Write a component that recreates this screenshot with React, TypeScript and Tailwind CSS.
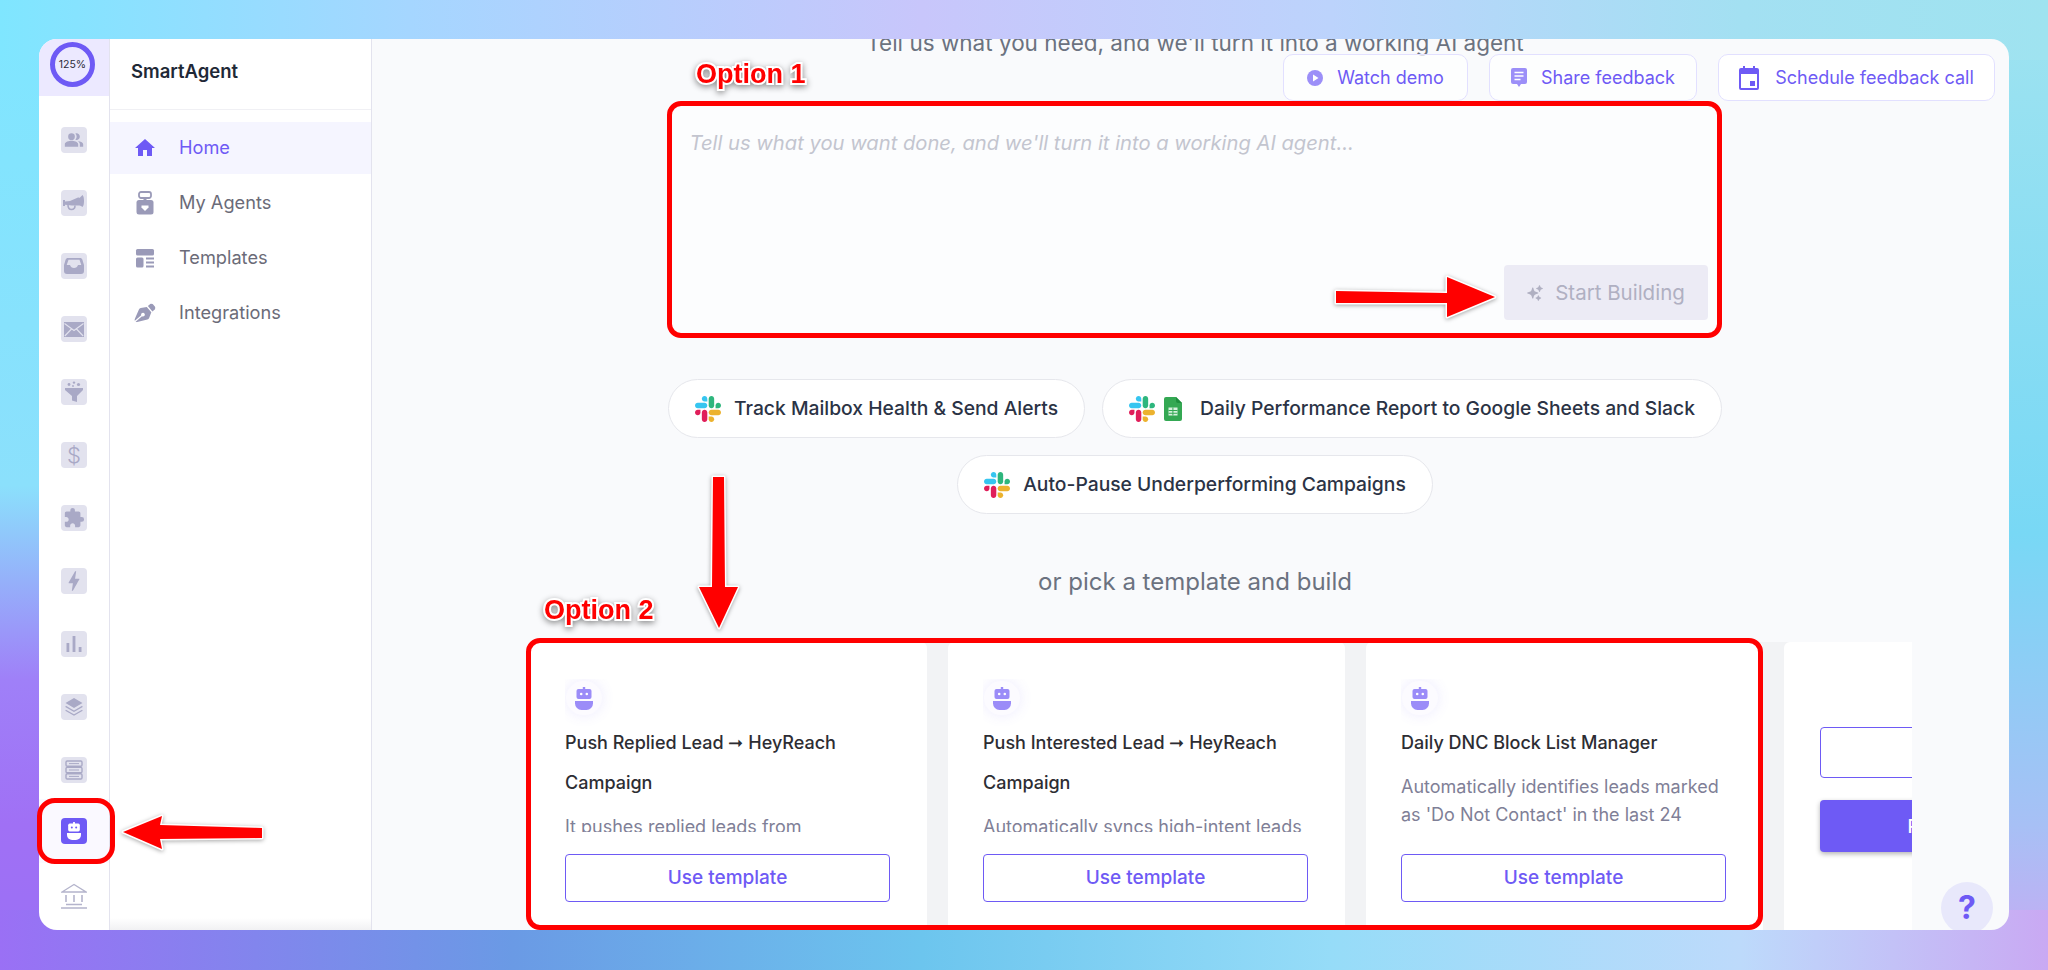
import React from "react";
import { MdHome, MdPeopleAlt, MdExtension, MdBolt } from "react-icons/md";
import { FaPenNib } from "react-icons/fa";
import { HiSparkles } from "react-icons/hi2";

const Slack = () => (
  <svg viewBox="0 0 122.8 122.8" className="w-[26px] h-[26px] shrink-0">
    <path fill="#E01E5A" d="M25.8 77.6c0 7.1-5.8 12.9-12.9 12.9S0 84.7 0 77.6s5.8-12.9 12.9-12.9h12.9v12.9z" />
    <path fill="#E01E5A" d="M32.3 77.6c0-7.1 5.8-12.9 12.9-12.9s12.9 5.8 12.9 12.9v32.3c0 7.1-5.8 12.9-12.9 12.9s-12.9-5.8-12.9-12.9V77.6z" />
    <path fill="#36C5F0" d="M45.2 25.8c-7.1 0-12.9-5.8-12.9-12.9S38.1 0 45.2 0s12.9 5.8 12.9 12.9v12.9H45.2z" />
    <path fill="#36C5F0" d="M45.2 32.3c7.1 0 12.9 5.8 12.9 12.9s-5.8 12.9-12.9 12.9H12.9C5.8 58.1 0 52.3 0 45.2s5.8-12.9 12.9-12.9h32.3z" />
    <path fill="#2EB67D" d="M97 45.2c0-7.1 5.8-12.9 12.9-12.9s12.9 5.8 12.9 12.9-5.8 12.9-12.9 12.9H97V45.2z" />
    <path fill="#2EB67D" d="M90.5 45.2c0 7.1-5.8 12.9-12.9 12.9s-12.9-5.8-12.9-12.9V12.9C64.7 5.8 70.5 0 77.6 0s12.9 5.8 12.9 12.9v32.3z" />
    <path fill="#ECB22E" d="M77.6 97c7.1 0 12.9 5.8 12.9 12.9s-5.8 12.9-12.9 12.9-12.9-5.8-12.9-12.9V97h12.9z" />
    <path fill="#ECB22E" d="M77.6 90.5c-7.1 0-12.9-5.8-12.9-12.9s5.8-12.9 12.9-12.9h32.3c7.1 0 12.9 5.8 12.9 12.9s-5.8 12.9-12.9 12.9H77.6z" />
  </svg>
);

const Sheets = () => (
  <svg viewBox="0 0 18 24" className="w-[18px] h-[24px] shrink-0">
    <path fill="#34A853" d="M2 0h10l6 6v16a2 2 0 0 1-2 2H2a2 2 0 0 1-2-2V2a2 2 0 0 1 2-2z" />
    <path fill="#1E8E3E" d="M12 0l6 6h-4a2 2 0 0 1-2-2z" />
    <path fill="#D7F0DE" d="M4.5 10.5h9v8h-9z" />
    <path fill="#34A853" d="M8.4 10.5h1v8h-1zM4.5 13h9v1h-9zM4.5 15.8h9v1h-9z" />
  </svg>
);

const Robot = ({ color, eye, className }: { color: string; eye: string; className: string }) => (
  <svg viewBox="0 0 18 23" className={className}>
    <rect x="7.8" y="0" width="2.4" height="3" fill={color} />
    <rect x="1.5" y="2" width="15" height="10" rx="2" fill={color} />
    <circle cx="6.2" cy="7" r="1.3" fill={eye} />
    <circle cx="11.8" cy="7" r="1.3" fill={eye} />
    <path fill={color} d="M0 14h18v2.5a6.5 6.5 0 0 1-6.5 6.5h-5A6.5 6.5 0 0 1 0 16.5z" />
  </svg>
);

const c = "#a9a9c6";
const railIcons: React.ReactNode[] = [
  <MdPeopleAlt key="a" size={20} color={c} />,
  <svg key="b" viewBox="0 0 22 18" className="w-[22px] h-[18px]">
    <path fill={c} d="M0 6h2v1.5l5-.5 8-3.5c1 0 1.2 0 1.5.5L18 2.5 19.5 1c1 1 1.5 3 1.5 6s-.5 5-1.5 6l-1.5-1-1.5-.5H9l-7-.8V12H0z" />
    <path fill="none" stroke={c} strokeWidth="1.6" d="M5 11c0 3 1.5 4.5 3.5 4.5S12 14 12 11.5" />
  </svg>,
  <svg key="c" viewBox="0 0 20 18" className="w-[20px] h-[18px]">
    <path fill={c} d="M4 1h12c1.2 0 2 .6 2.4 1.8L20 8v6a3 3 0 0 1-3 3H3a3 3 0 0 1-3-3V8l1.6-5.2C2 1.6 2.8 1 4 1z" />
    <path fill="#e2e2ee" d="M4.5 2.8h11l1.8 5.2H14c-.6 2-2 3-4 3s-3.4-1-4-3H2.7z" />
  </svg>,
  <svg key="d" viewBox="0 0 20 15" className="w-[20px] h-[15px]">
    <rect width="20" height="15" fill={c} />
    <path fill="none" stroke="#e2e2ee" strokeWidth="1.1" d="M0.5 1.5 10 8.5l9.5-7M0.8 14 7.5 7M19.2 14 12.5 7" />
  </svg>,
  <svg key="e" viewBox="0 0 20 22" className="w-[20px] h-[22px]">
    <circle cx="5" cy="3.5" r="1.4" fill={c} /><circle cx="10" cy="1.6" r="1.2" fill={c} /><circle cx="14.5" cy="3.5" r="1.6" fill={c} /><circle cx="9" cy="5" r="0.9" fill={c} />
    <path fill={c} d="M1 7h18v2l-6 6v6l-5-1.5V15L1 9z" />
  </svg>,
  <span key="f" className="text-[22px] leading-none font-light text-[#a9a9c6]">$</span>,
  <MdExtension key="g" size={22} color={c} />,
  <MdBolt key="h" size={26} color={c} />,
  <svg key="i" viewBox="0 0 16 16" className="w-[16px] h-[16px]">
    <rect x="0.5" y="7" width="2.8" height="9" fill={c} /><rect x="6.6" y="0" width="2.8" height="16" fill={c} /><rect x="12.7" y="11" width="2.8" height="5" fill={c} />
  </svg>,
  <svg key="j" viewBox="0 0 18 18" className="w-[18px] h-[18px]">
    <path fill={c} d="M9 0l8.5 5L9 10 .5 5z" />
    <path fill="none" stroke={c} strokeWidth="1.3" d="M.6 8.4 9 13.2l8.4-4.8M.6 12.2 9 17l8.4-4.8" />
  </svg>,
  <svg key="k" viewBox="0 0 18 20" className="w-[18px] h-[20px]">
    <g fill="none" stroke={c} strokeWidth="1.4">
      <rect x="1" y="1" width="16" height="5.2" rx="1.2" /><rect x="1" y="7.4" width="16" height="5.2" rx="1.2" /><rect x="1" y="13.8" width="16" height="5.2" rx="1.2" />
      <path d="M4 3.6h10M4 10h10M4 16.4h10" strokeWidth="1" />
    </g>
  </svg>,
];

const RailTile = ({ children }: { children: React.ReactNode }) => (
  <div className="w-[26px] h-[26px] rounded-[4px] bg-[#e2e2ee] flex items-center justify-center">{children}</div>
);

const Rail = () => (
  <div className="w-[71px] shrink-0 bg-white border-r border-[#e3e3ee] flex flex-col">
    <div className="h-[57px] bg-[#ece9ff] flex pl-[11px] pt-[3px]">
      <div className="w-[45px] h-[45px] rounded-full border-[5px] border-[#6e5af5] flex items-center justify-center text-[10.5px] text-[#2b2b38]">125%</div>
    </div>
    <div className="flex flex-col items-center gap-[37px] pt-[31px]">
      {railIcons.map((ic, i) => <RailTile key={i}>{ic}</RailTile>)}
    </div>
    <div className="h-[64px] mt-[16px] bg-[#faf9ff] flex items-center justify-center">
      <div className="w-[26px] h-[26px] rounded-[4px] bg-[#6e5af5] flex items-center justify-center">
        <Robot color="#ffffff" eye="#6e5af5" className="w-[14px] h-[18px]" />
      </div>
    </div>
    <div className="flex justify-center pt-[20px]">
      <svg viewBox="0 0 26 26" className="w-[26px] h-[26px]">
        <g fill="none" stroke="#b4b4cc" strokeWidth="1.3">
          <path d="M1 9 13 1.5 25 9z" />
          <path d="M5 12v7M13 12v7M21 12v7" strokeWidth="1.6" />
          <path d="M5 21.5h16M0 25h26" strokeWidth="1.5" />
        </g>
      </svg>
    </div>
  </div>
);

const navRows = [
  { label: "Home", active: true, icon: <MdHome size={26} color="#6e5af5" /> },
  {
    label: "My Agents",
    icon: (
      <svg viewBox="0 0 18 24" className="w-[18px] h-[24px]">
        <rect x="3" y="1" width="12" height="6" rx="2" fill="none" stroke="#9a9ab8" strokeWidth="1.8" />
        <rect x="7.5" y="6" width="3" height="4" fill="#9a9ab8" />
        <rect x="0.5" y="9" width="17" height="14.5" rx="2.5" fill="#9a9ab8" />
        <path fill="#fff" d="M9 20l-3.5-3.5v-2h7v2z" />
      </svg>
    ),
  },
  {
    label: "Templates",
    icon: (
      <svg viewBox="0 0 20 19" className="w-[20px] h-[19px]">
        <rect x="1" y="0" width="18" height="6.5" rx="1.5" fill="#9a9ab8" />
        <rect x="1" y="8.5" width="7.5" height="10" rx="1.5" fill="#9a9ab8" />
        <path d="M11 9.5h8M11 13.5h8M11 17.5h8" stroke="#9a9ab8" strokeWidth="1.8" />
      </svg>
    ),
  },
  { label: "Integrations", icon: <FaPenNib size={20} color="#9a9ab8" className="rotate-[5deg]" /> },
];

const Sidebar = () => (
  <div className="w-[262px] shrink-0 bg-white border-r border-[#e3e3ee] flex flex-col">
    <div className="h-[71px] shrink-0 border-b border-[#f0f0f4] pl-[21px] pt-[20px] text-[18.5px] leading-[24px] font-semibold text-[#1f2937]">SmartAgent</div>
    <div className="flex flex-col gap-[3px] pt-[12px]">
      {navRows.map((r) => (
        <div key={r.label} className={`h-[52px] flex items-center ${r.active ? "bg-[#f5f5ff] text-[#6e5af5]" : "text-[#6b6b78]"}`}>
          <div className="w-[69px] pl-[23px] flex items-center">
            <div className="w-[24px] flex justify-center">{r.icon}</div>
          </div>
          <span className="text-[18.2px] pb-[1px]">{r.label}</span>
        </div>
      ))}
    </div>
    <div className="mt-auto h-[12px] bg-gradient-to-t from-[#f1f1f3] to-white" />
  </div>
);

const pills = [
  { label: "Track Mailbox Health & Send Alerts", sheets: false },
  { label: "Daily Performance Report to Google Sheets and Slack", sheets: true },
  { label: "Auto-Pause Underperforming Campaigns", sheets: false },
];

const cards = [
  { title: "Push Replied Lead ➞ HeyReach Campaign", desc: "It pushes replied leads from Smartlead into a selected HeyReach campaign" },
  { title: "Push Interested Lead ➞ HeyReach Campaign", desc: "Automatically syncs high-intent leads from Smartlead to HeyReach" },
  { title: "Daily DNC Block List Manager", desc: "Automatically identifies leads marked as 'Do Not Contact' in the last 24 hours and blocks them" },
];

const Card = ({ title, desc }: { title: string; desc: string }) => (
  <div className="w-[397px] h-[300px] shrink-0 bg-white rounded-t-[6px] px-[35px] pt-[37px]">
    <div className="h-[153px] overflow-hidden pt-[2px]">
      <div className="ml-[1px] w-[36px] h-[34px] rounded-full bg-[#fcfbff] shadow-[0_0_14px_rgba(110,90,245,0.12)] flex items-center justify-center">
        <Robot color="#9b8cf8" eye="#ffffff" className="w-[18px] h-[23px]" />
      </div>
      <div className="mt-[8px] text-[18px] leading-[40px] font-medium text-[#2d2d33]">{title}</div>
      <div className="mt-[10px] text-[18px] leading-[28px] text-[#7f7f97]">{desc}</div>
    </div>
    <button className="mt-[22px] w-[325px] h-[48px] rounded-[4px] border border-[#6e5af5] text-[#6e5af5] text-[19px] font-medium">Use template</button>
  </div>
);

const Main = () => (
  <div className="relative flex-1 min-w-0 bg-[#f9fafc] overflow-hidden">
    <div className="flex flex-col items-center pl-[9px] -mt-[12px]">
      <div className="h-[32px] text-[22.5px] leading-[32px] text-[#6b7280]">Tell us what you need, and we'll turn it into a working AI agent</div>
      <div className="mt-[42px] w-[1055px] h-[237px] rounded-[14px] bg-[#fcfdfe] relative px-[22px] pt-[28px] text-[20.2px] leading-[28px] italic text-[#c3c5cf]">
        Tell us what you want done, and we'll turn it into a working AI agent...
        <div className="absolute right-[15px] bottom-[18px] w-[204px] h-[55px] rounded-[4px] bg-[#ecebf5] flex items-center justify-center gap-[11px] not-italic text-[#b0b0c2] text-[20.5px]">
          <HiSparkles size={18} />
          Start Building
        </div>
      </div>
      <div className="mt-[41px] w-[1060px] flex flex-wrap justify-center gap-[17px]">
        {pills.map((p) => (
          <div key={p.label} className="h-[59px] rounded-full bg-white border border-[#e6e7ec] px-[26px] flex items-center text-[19.3px] font-medium text-[#2b3345]">
            <Slack />
            {p.sheets && <div className="ml-[9px] mr-[5px]"><Sheets /></div>}
            <span className="ml-[13px] whitespace-nowrap">{p.label}</span>
          </div>
        ))}
      </div>
      <div className="mt-[52px] h-[32px] text-[24px] leading-[32px] text-[#6b7280]">or pick a template and build</div>
      <div className="mt-[44px] w-[1434px] pl-[52px]">
        <div className="flex gap-[21px] bg-[#f2f3f5] overflow-hidden">
          {cards.map((x) => <Card key={x.title} {...x} />)}
          <div className="w-[397px] h-[300px] shrink-0 bg-white rounded-t-[6px] px-[36px] pt-[85px]">
            <div className="w-[325px] h-[51px] rounded-[4px] border border-[#6e5af5]" />
            <div className="mt-[22px] w-[325px] h-[52px] rounded-[4px] bg-[#6e5af5] shadow-[0_2px_5px_rgba(0,0,0,0.3)] flex items-center justify-center text-white text-[18px] font-medium">Request template</div>
          </div>
        </div>
      </div>
    </div>
    <div className="absolute top-[15px] right-[14px] flex gap-[21px] text-[18px] text-[#6e5af5]">
      <div className="h-[47px] w-[185px] rounded-[10px] border border-[#e2e0ff] bg-white/70 flex items-center justify-center gap-[14px]">
        <svg viewBox="0 0 16 16" className="w-[16px] h-[16px]"><circle cx="8" cy="8" r="8" fill="#9c8ff8" /><path fill="#fff" d="M6 4.5l5.5 3.5L6 11.5z" /></svg>
        Watch demo
      </div>
      <div className="h-[47px] w-[208px] rounded-[10px] border border-[#e2e0ff] bg-white/70 flex items-center justify-center gap-[14px]">
        <svg viewBox="0 0 16 19" className="w-[16px] h-[19px]"><path fill="#9c8ff8" d="M2 0h12a2 2 0 0 1 2 2v12a2 2 0 0 1-2 2h-4l-2 3-2-3H2a2 2 0 0 1-2-2V2a2 2 0 0 1 2-2z" /><path stroke="#fff" strokeWidth="1.3" d="M3.5 4.5h9M3.5 8h9M3.5 11.5h6" /></svg>
        Share feedback
      </div>
      <div className="h-[47px] w-[277px] rounded-[10px] border border-[#e2e0ff] bg-white flex items-center justify-center gap-[16px]">
        <svg viewBox="0 0 20 24" className="w-[20px] h-[24px]"><path fill="#6e5af5" d="M4 0h2v2h8V0h2v2h2a2 2 0 0 1 2 2v18a2 2 0 0 1-2 2H2a2 2 0 0 1-2-2V4a2 2 0 0 1 2-2h2z" /><path fill="#fff" d="M2 8h16v14H2z" /><path fill="#6e5af5" d="M11 15h5v5h-5z" /></svg>
        Schedule feedback call
      </div>
    </div>
    <div className="absolute left-[1569px] top-[843px] w-[52px] h-[52px] rounded-full bg-[#e8e8fb] flex items-center justify-center text-[#6e5af5] text-[32px] font-bold">?</div>
  </div>
);

const optionText = "absolute text-[27px] leading-none font-bold text-[#ff0000] font-['Liberation_Sans',sans-serif] [-webkit-text-stroke:4px_#ffffff] [paint-order:stroke_fill] drop-shadow-[0_2px_3px_rgba(0,0,0,0.45)]";

const Annotations = () => (
  <>
    <div className="absolute left-[667px] top-[101px] w-[1055px] h-[237px] rounded-[14px] border-[5px] border-[#ff0000]" />
    <div className="absolute left-[526px] top-[638px] w-[1237px] h-[292px] rounded-[14px] border-[5px] border-[#ff0000]" />
    <div className="absolute left-[37px] top-[798px] w-[78px] h-[66px] rounded-[18px] border-[5px] border-[#ff0000]" />
    <div className={`${optionText} left-[696px] top-[61px]`}>Option 1</div>
    <div className={`${optionText} left-[544px] top-[597px]`}>Option 2</div>
    <svg viewBox="0 0 2048 970" className="absolute inset-0 w-[2048px] h-[970px] drop-shadow-[0_1px_2px_rgba(0,0,0,0.35)]">
      <g fill="#ff0000" stroke="#ffffff" strokeWidth="3" strokeLinejoin="round" paintOrder="stroke">
        <polygon points="123,832 162,816 160,825 262,828 262,838 160,839 162,849" />
        <polygon points="1336,291 1447,293 1447,277 1495,297 1447,317 1447,303 1336,303" />
        <polygon points="713,477 724,477 725,587 738,587 719,628 699,587 712,587" />
      </g>
    </svg>
  </>
);

export default function App() {
  return (
    <div className="relative h-[970px] overflow-hidden font-['Inter',sans-serif] [background:linear-gradient(90deg,#7fe6ff_0%,#a5d6ff_20%,#c8c6fb_45%,#bcd3fc_65%,#a3e0f2_85%,#9fe3f0_100%)_top/100%_60px_no-repeat,linear-gradient(90deg,#9a70f5_0%,#6a9ae5_25%,#6cc5ee_45%,#96dcf8_65%,#bddafb_85%,#c9a9f3_100%)_bottom/100%_60px_no-repeat,linear-gradient(180deg,#7fe6ff_0%,#8be0fc_50%,#9f80f8_70%,#a070f5_85%,#9a70f5_100%)_left/60px_100%_no-repeat,linear-gradient(180deg,#9fe3f0_0%,#78d8f5_55%,#a7c0f5_85%,#c9a9f3_100%)_right/60px_100%_no-repeat] pt-[39px] px-[39px] pb-[40px]">
      <div className="flex h-full rounded-[18px] overflow-hidden">
        <Rail />
        <Sidebar />
        <Main />
      </div>
      <Annotations />
    </div>
  );
}
